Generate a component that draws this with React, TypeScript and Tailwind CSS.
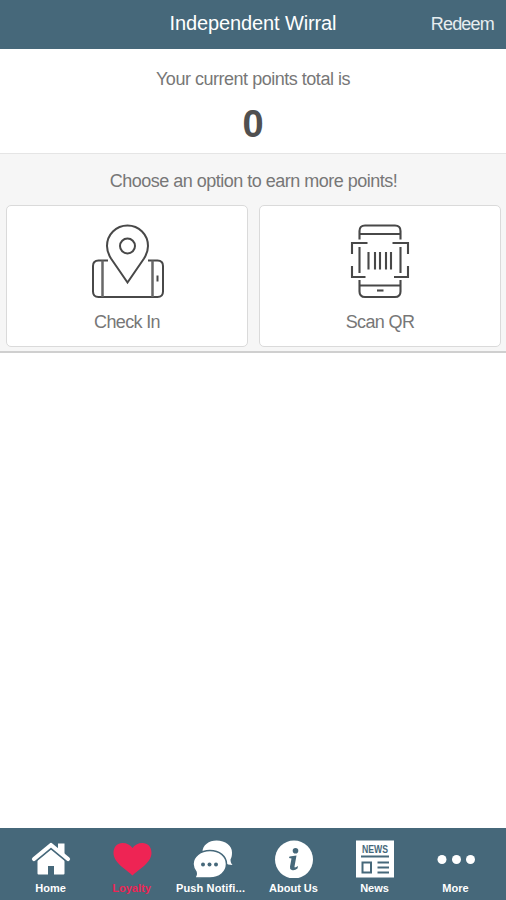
import type { ReactNode } from "react";

function CheckInIcon() {
  return (
    <svg className="translate-x-px" width="74" height="76" viewBox="0 0 74 76" fill="none" stroke="#484848" strokeWidth="2">
      <path d="M17 37.500H7.500Q2 37.500 2 43V68.500Q2 74 7.500 74H66.500Q72 74 72 68.500V43Q72 37.500 66.500 37.500H57" />
      <path d="M11.500 37.500V74M61.500 37.500V74" stroke="#686868" strokeWidth="2.500" />
      <path d="M36.500 59.500L20 35.500C17.500 31.500 16 27.500 16 23C16 11.500 25 2.500 36.500 2.500S57 11.500 57 23C57 27.500 55.500 31.500 53 35.500Z" />
      <circle cx="36.500" cy="23" r="7.500" />
      <path d="M66.500 52.500V58.500" />
    </svg>
  );
}

function ScanIcon() {
  return (
    <svg width="60" height="76" viewBox="0 0 60 76" fill="none" stroke="#484848" strokeWidth="2.100">
      <path d="M9.500 16.500V8Q9.500 2.500 15 2.500H45Q50.500 2.500 50.500 8V16.500M9.500 11H50.500" />
      <path d="M9.500 24V50M50.500 24V50" />
      <path d="M9.500 57V68.500Q9.500 74 15 74H45Q50.500 74 50.500 68.500V57M9.500 62.500H50.500" />
      <path d="M2 31V20H17.500M42.500 20H58V31M2 43V54H15.500M44 54H58V43" />
      <path d="M18.500 29V46.500M25 29V46.500M30 29V46.500M36 29V46.500M41 29V46.500" />
      <path d="M27 67.500H33.500" />
    </svg>
  );
}

function HomeIcon() {
  return (
    <svg width="40" height="40" viewBox="0 0 40 40" fill="#fff">
      <path d="M6.500 22L20 11L33.500 22V35.500Q33.500 36.500 32.500 36.500H23V28H17V36.500H7.500Q6.500 36.500 6.500 35.500Z" />
      <path d="M3 22.700L20 8.700L37 22.700" fill="none" stroke="#46687a" strokeWidth="4.500" />
      <path d="M27 5.500H33.500V18L27 13Z" />
      <path d="M3 21L20 7L37 21" fill="none" stroke="#fff" strokeWidth="4.200" strokeLinecap="round" strokeLinejoin="round" />
    </svg>
  );
}

function HeartIcon() {
  return (
    <svg width="40" height="40" viewBox="0 0 40 40" fill="#ee2454">
      <path d="M20.500 37.500C15 32 1.500 25 1.500 15C1.500 8.500 5.500 5 10.500 5C15 5 18.500 7 20.500 10C22.500 7 26 5 30.500 5C35.500 5 39.500 8.500 39.500 15C39.500 25 26 32 20.500 37.500Z" />
    </svg>
  );
}

function ChatIcon() {
  return (
    <svg className="translate-x-px overflow-visible" width="40" height="40" viewBox="0 0 40 40" fill="#fff">
      <path d="M8.500 14C8.500 7 15 2.500 22.500 2.500C31.500 2.500 38 7.500 38 14.500C38 18 37.500 19.500 36.500 21.500C36.500 23.500 37 25.500 38.500 27C35 27 33 26 31 25Z" />
      <path d="M16 12.500C25.500 12.500 32.500 18.500 32.500 26C32.500 34 25.500 40 16 40C10 40 6 40.300 0 40C2 38.500 2.500 36 2 34C.3 31.500 -1 29.500 -1 26C-1 18.500 6.500 12.500 16 12.500Z" stroke="#46687a" strokeWidth="1.500" />
      <g fill="#46687a">
        <circle cx="9" cy="26.500" r="2" />
        <circle cx="15.500" cy="26.500" r="2" />
        <circle cx="22" cy="26.500" r="2" />
      </g>
    </svg>
  );
}

function InfoIcon() {
  return (
    <svg width="40" height="40" viewBox="0 0 40 40">
      <circle cx="20" cy="21.500" r="19" fill="#fff" />
      <circle cx="21.500" cy="12.800" r="2.800" fill="#46687a" />
      <path d="M15.500 18.500L22.500 17.500L20.500 28.500Q20.200 30.500 24 28L23.500 30.500Q20.500 33 17.800 32Q15.500 31.200 16 28.500L17.500 20.500L15 20Z" fill="#46687a" />
    </svg>
  );
}

function NewsIcon() {
  return (
    <svg width="40" height="40" viewBox="0 0 40 40">
      <path d="M1 2.500H39V39.500H1Z" fill="#fff" />
      <text x="20" y="15" textAnchor="middle" textLength="26" lengthAdjust="spacingAndGlyphs" fontFamily="Liberation Sans, sans-serif" fontSize="10" fontWeight="700" fill="#46687a">NEWS</text>
      <path d="M6 18.500H34M22.500 24.500H34M22.500 29.500H34M22.500 34.500H34" stroke="#46687a" strokeWidth="2" />
      <path d="M7.500 24.500H16V34.500H7.500Z" fill="none" stroke="#46687a" strokeWidth="2" />
    </svg>
  );
}

function MoreIcon() {
  return (
    <svg width="40" height="40" viewBox="0 0 40 40" fill="#fff">
      <circle cx="6" cy="21.500" r="4.500" />
      <circle cx="20.500" cy="21.500" r="4.500" />
      <circle cx="34.500" cy="21.500" r="4.500" />
    </svg>
  );
}

const tabs: { label: string; icon: ReactNode; active?: boolean }[] = [
  { label: "Home", icon: <HomeIcon /> },
  { label: "Loyalty", icon: <HeartIcon />, active: true },
  { label: "Push Notifi...", icon: <ChatIcon /> },
  { label: "About Us", icon: <InfoIcon /> },
  { label: "News", icon: <NewsIcon /> },
  { label: "More", icon: <MoreIcon /> },
];

function OptionCard({ label, icon }: { label: string; icon: ReactNode }) {
  return (
    <button className="flex h-[142px] flex-1 flex-col items-center rounded-[5px] border border-[#dadada] bg-white pt-[17px]">
      {icon}
      <span className="mt-[11px] text-[18px] leading-6 tracking-[-0.65px]">{label}</span>
    </button>
  );
}

export default function App() {
  return (
    <div className="flex h-[900px] w-full flex-col bg-white font-['Liberation_Sans',sans-serif] text-[#777]">
      <header className="grid h-[49px] shrink-0 grid-cols-[1fr_auto_1fr] items-center bg-[#46687a] px-3 text-white">
        <span />
        <h1 className="pb-[3px] text-[20px] leading-6 tracking-[-0.12px]">Independent Wirral</h1>
        <button className="justify-self-end pb-0.5 text-[18px] leading-6 tracking-[-0.8px] text-[#e6edf0]">Redeem</button>
      </header>

      <main className="flex-1">
        <section className="flex h-[104px] flex-col items-center pt-[18px]">
          <p className="text-[18px] leading-6 tracking-[-0.48px]">Your current points total is</p>
          <p className="mt-[13px] text-[38px] leading-10 font-bold text-[#505050]">0</p>
        </section>
        <section className="h-[200px] border-t border-b-2 border-t-[#e5e5e5] border-b-[#cfcfcf] bg-[#f6f6f6] pr-[5px] pl-[6px]">
          <p className="pt-[15px] text-center text-[18px] leading-6 tracking-[-0.5px]">
            Choose an option to earn more points!
          </p>
          <div className="mt-3 flex gap-[11px]">
            <OptionCard label="Check In" icon={<CheckInIcon />} />
            <OptionCard label="Scan QR" icon={<ScanIcon />} />
          </div>
        </section>
      </main>

      <nav className="grid h-[72px] shrink-0 grid-cols-6 bg-[#46687a] px-2.5">
        {tabs.map((tab) => (
          <button
            key={tab.label}
            className={`flex flex-col items-center pt-[10px] text-[11px] leading-4 font-bold whitespace-nowrap ${tab.active ? "text-[#ee2454]" : "text-white"}`}
          >
            {tab.icon}
            <span className={tab.label.endsWith("...") ? "mt-0.5 pr-1 tracking-[0.14px]" : "mt-0.5"}>{tab.label}</span>
          </button>
        ))}
      </nav>
    </div>
  );
}
